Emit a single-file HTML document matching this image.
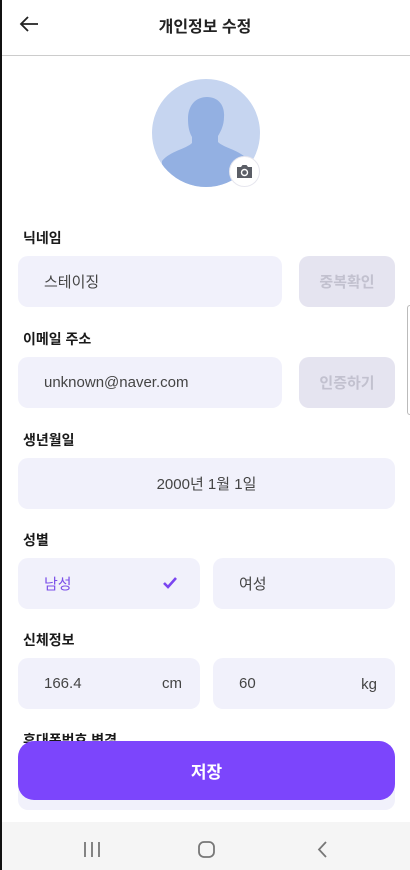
<!DOCTYPE html>
<html><head><meta charset="utf-8"><style>
*{margin:0;padding:0;box-sizing:border-box}
body{width:410px;height:870px;overflow:hidden;background:#fff;font-family:"Liberation Sans","Noto Sans CJK KR",sans-serif;position:relative;color:#222}
.a{position:absolute}
.lbl{position:absolute;left:23px;font-size:14px;font-weight:700;color:#1a1a1a}
.f{position:absolute;background:#f1f1fb;border-radius:10px;font-size:15px;color:#444;display:flex;align-items:center;padding-left:26px}
.b{position:absolute;background:#e5e4f0;border-radius:10px;font-size:15px;font-weight:700;color:#c2c1cf;display:flex;align-items:center;justify-content:center}
</style></head><body>
<div class="a" style="left:0;top:0;width:2px;height:870px;background:#111"></div>
<svg class="a" style="left:18px;top:12px" width="24" height="24" viewBox="0 0 24 24"><path d="M20 12H3M10 5l-7 7 7 7" fill="none" stroke="#222" stroke-width="1.8"/></svg>
<div class="a" style="left:0;width:410px;top:13px;text-align:center;font-size:16px;font-weight:700;color:#222">개인정보 수정</div>
<div class="a" style="left:2px;top:55px;width:408px;height:1px;background:#ccc"></div>
<svg class="a" style="left:152px;top:79px" width="110" height="110" viewBox="0 0 110 110">
<defs><clipPath id="c"><circle cx="54" cy="54" r="54"/></clipPath></defs>
<circle cx="54" cy="54" r="54" fill="#c6d5f0"/>
<g clip-path="url(#c)" fill="#93b0e2"><path d="M36 40c0-14 8-22 19-22s18 8 17 20c0 8-3 14-6 19v6c6 6 22 8 30 18v30H10V82c8-10 24-12 30-18v-6c-3-5-4-11-4-18z"/></g>
</svg>
<div class="a" style="left:229px;top:156px;width:31px;height:31px;border-radius:50%;background:#fff;border:1px solid #e6e6ee"></div>
<svg class="a" style="left:235px;top:162px" width="19" height="19" viewBox="0 0 19 19"><path d="M2 5h4l1.5-2h4L13 5h4v11H2z" fill="#5b5e66"/><circle cx="9.5" cy="10.5" r="3" fill="none" stroke="#fff" stroke-width="1.4"/></svg>
<div class="lbl" style="top:228px">닉네임</div>
<div class="f" style="left:18px;top:256px;width:264px;height:51px">스테이징</div>
<div class="b" style="left:299px;top:256px;width:96px;height:51px">중복확인</div>
<div class="lbl" style="top:329px">이메일 주소</div>
<div class="f" style="left:18px;top:357px;width:264px;height:51px">unknown@naver.com</div>
<div class="b" style="left:299px;top:357px;width:96px;height:51px">인증하기</div>
<div class="a" style="left:407px;top:305px;width:3px;height:110px;border:1px solid #bbb;border-right:none;border-radius:4px 0 0 4px"></div>
<div class="lbl" style="top:430px">생년월일</div>
<div class="f" style="left:18px;top:458px;width:377px;height:51px;justify-content:center;padding:0">2000년 1월 1일</div>
<div class="lbl" style="top:530px">성별</div>
<div class="f" style="left:18px;top:558px;width:182px;height:51px;color:#7a4fe8">남성</div>
<svg class="a" style="left:162px;top:576px" width="16" height="14" viewBox="0 0 16 14"><path d="M2 7l4 4 8-9" fill="none" stroke="#7a45f0" stroke-width="2.6"/></svg>
<div class="f" style="left:213px;top:558px;width:182px;height:51px">여성</div>
<div class="lbl" style="top:630px">신체정보</div>
<div class="f" style="left:18px;top:658px;width:182px;height:51px">166.4<span class="a" style="right:18px">cm</span></div>
<div class="f" style="left:213px;top:658px;width:182px;height:51px">60<span class="a" style="right:18px;top:18px">kg</span></div>
<div class="lbl" style="top:730px">휴대폰번호 변경</div>
<div class="f" style="left:18px;top:758px;width:377px;height:52px"></div>
<div class="a" style="left:18px;top:741px;width:377px;height:59px;border-radius:16px;background:#7c45fc;color:#fff;font-size:17px;font-weight:700;display:flex;align-items:center;justify-content:center">저장</div>
<div class="a" style="left:2px;top:822px;width:408px;height:48px;background:#f5f5f5"></div>
<svg class="a" style="left:80px;top:838px" width="250" height="22" viewBox="0 0 250 22"><path d="M5 4v15M12 4v15M19 4v15" stroke="#777" stroke-width="1.8"/><rect x="119" y="4" width="15" height="15" rx="5" fill="none" stroke="#777" stroke-width="1.8"/><path d="M246 4l-7 7.5 7 7.5" fill="none" stroke="#777" stroke-width="1.8"/></svg>
</body></html>
